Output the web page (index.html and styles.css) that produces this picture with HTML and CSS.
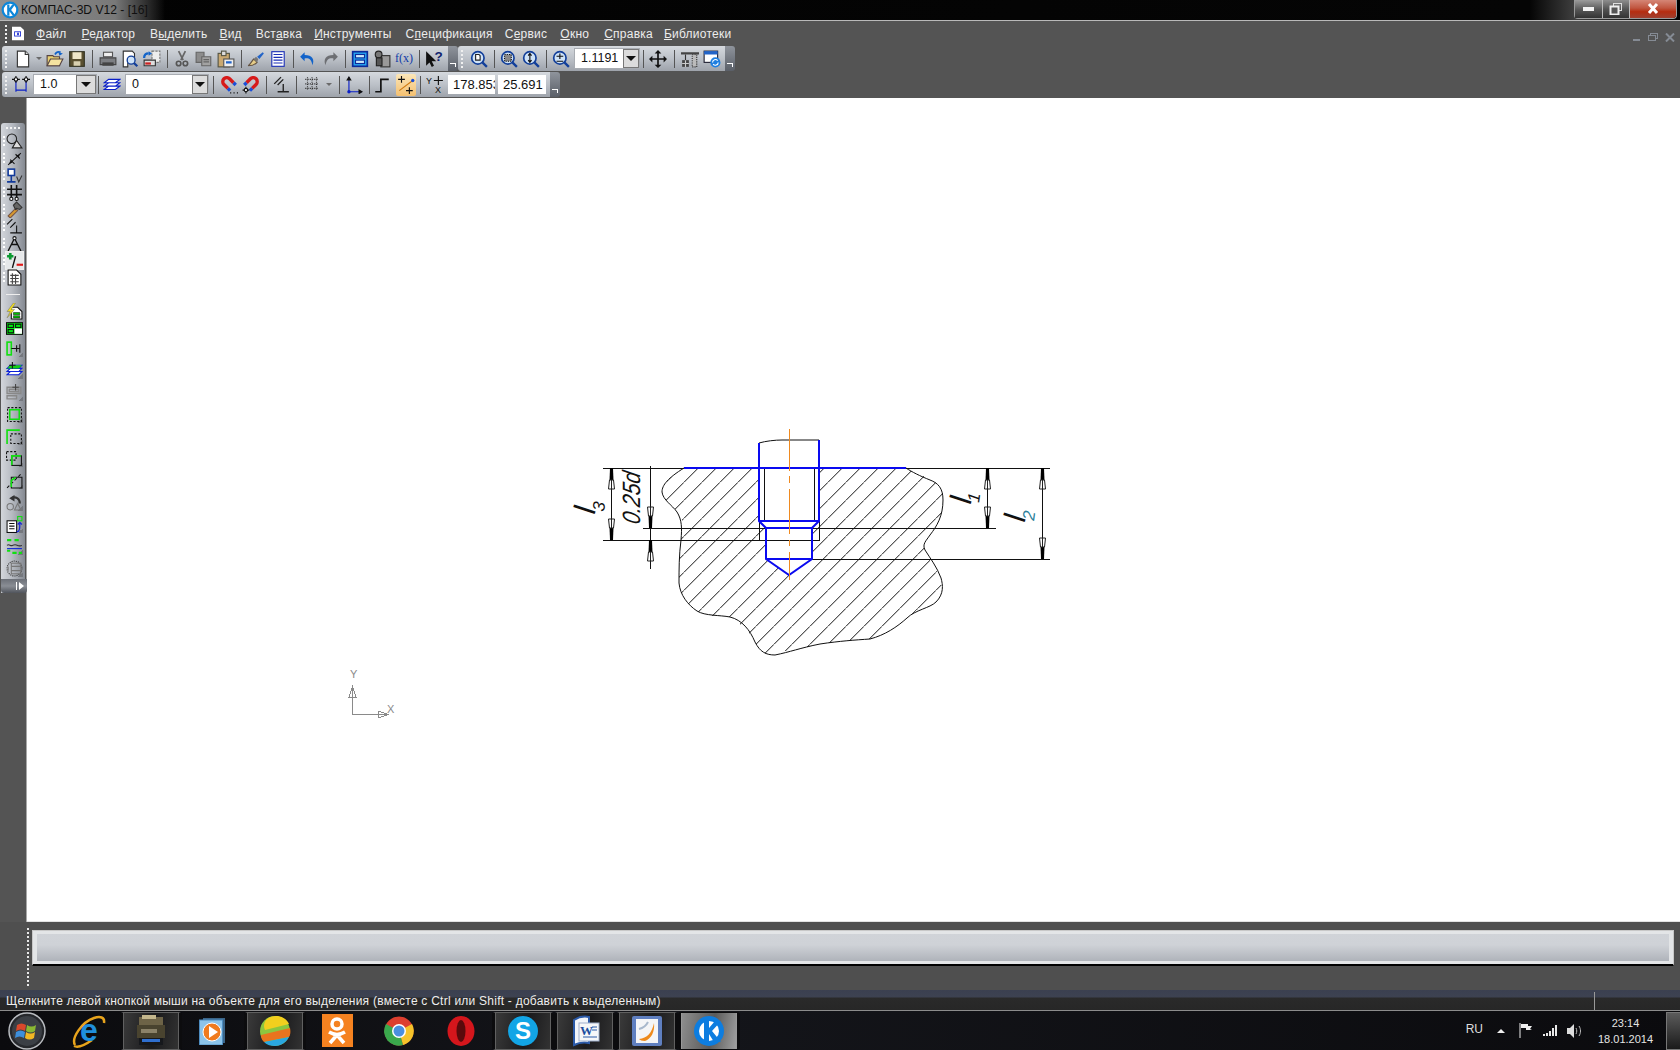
FILE: index.html
```html
<!DOCTYPE html>
<html lang="ru">
<head>
<meta charset="utf-8">
<title>КОМПАС-3D V12</title>
<link rel="stylesheet" href="styles.css">
</head>
<body>
<div class="app">
  <header class="titlebar">
    <svg class="applogo" viewBox="0 0 16 16"><circle cx="8" cy="8" r="7.5" fill="#0d86d8"/><circle cx="8" cy="8" r="5.5" fill="#fff"/><path d="M5.5 3v10h2V9l3 4h2.5L9 8l3.500-5H10L7.500 6.500V3z" fill="#0d86d8"/></svg>
    <span class="apptitle">КОМПАС-3D V12 - [16]</span>
    <div class="winbtns">
      <div class="wb wb-min"><span class="wb-dash"></span></div>
      <div class="wb wb-res"><svg width="14" height="12" viewBox="0 0 14 12"><rect x="4.500" y="0.500" width="8" height="7" fill="none" stroke="#ddd"/><rect x="1.500" y="3.500" width="8" height="8" fill="#555" stroke="#eee" stroke-width="2"/></svg></div>
      <div class="wb wb-close"><svg width="14" height="11" viewBox="0 0 14 11"><path d="M3 1l8 9M11 1l-8 9" stroke="#fff" stroke-width="3"/></svg></div>
    </div>
  </header>

  <nav class="menubar">
    <span class="grip grip-menu"></span>
    <svg class="docicon" viewBox="0 0 14 16"><path d="M0 0h10l4 4v12H0z" fill="#fff"/><rect x="3" y="6" width="7" height="5" fill="none" stroke="#1a2bd0"/><rect x="6" y="7" width="2" height="3" fill="#1a2bd0"/></svg>
    <span class="mi mi-1"><u>Ф</u>айл</span>
    <span class="mi mi-2"><u>Р</u>едактор</span>
    <span class="mi mi-3">В<u>ы</u>делить</span>
    <span class="mi mi-4"><u>В</u>ид</span>
    <span class="mi mi-5">Вст<u>а</u>вка</span>
    <span class="mi mi-6"><u>И</u>нструменты</span>
    <span class="mi mi-7">С<u>п</u>ецификация</span>
    <span class="mi mi-8">С<u>е</u>рвис</span>
    <span class="mi mi-9"><u>О</u>кно</span>
    <span class="mi mi-10"><u>С</u>правка</span>
    <span class="mi mi-11"><u>Б</u>иблиотеки</span>
    <div class="mdibtns">
      <svg width="8" height="8" viewBox="0 0 8 8"><rect y="6" width="7" height="2" fill="#858b94"/></svg>
      <svg width="10" height="8" viewBox="0 0 10 8"><rect x="2.500" y="0.500" width="7" height="5" fill="none" stroke="#858b94"/><rect x="0.500" y="2.500" width="7" height="5" fill="#555" stroke="#858b94"/></svg>
      <svg width="10" height="9" viewBox="0 0 10 9"><path d="M1 0.500l8 8M9 0.500l-8 8" stroke="#858b94" stroke-width="2"/></svg>
    </div>
  </nav>

  <div class="tbrow">
    <div class="tg tg-a">
      <span class="grip"></span>
      <span class="ic"><svg viewBox="0 0 16 16"><path d="M3 1h7l3 3v11H3z" fill="#fff" stroke="#333"/><path d="M10 1v3h3" fill="#ddd" stroke="#333"/></svg></span>
      <span class="ic ic-a"><span class="tri tri-g"></span></span>
      <span class="ic"><svg viewBox="0 0 16 16"><path d="M1 5h5l1 1h5v8H1z" fill="#e8d070" stroke="#544"/><path d="M1 14l3-6h11l-3 6z" fill="#f5e3a0" stroke="#544"/><path d="M8 4c1-2 3-3 5-2" fill="none" stroke="#1263c9" stroke-width="1.500"/><path d="M15 3l-3 2-1-3z" fill="#1263c9"/></svg></span>
      <span class="ic"><svg viewBox="0 0 16 16"><rect x="1.500" y="1.500" width="13" height="13" fill="#5a5030" stroke="#332"/><rect x="4" y="2" width="8" height="6" fill="#efe6c8"/><rect x="5" y="10" width="6" height="4" fill="#d8d0b0"/></svg></span>
      <span class="sep sep-9"></span>
      <span class="ic"><svg viewBox="0 0 16 16"><rect x="4" y="2" width="8" height="4" fill="#eee" stroke="#555"/><path d="M1 7h14v6H1z" fill="#7d7f83" stroke="#444"/><rect x="3" y="11" width="10" height="3" fill="#444"/></svg></span>
      <span class="ic"><svg viewBox="0 0 16 16"><path d="M2 1h8l2 2v6H6v6H2z" fill="#fff" stroke="#333"/><circle cx="9" cy="9" r="3.500" fill="#cfe3f7" stroke="#123f9a" stroke-width="1.200"/><path d="M11.500 11.500l3 3" stroke="#123f9a" stroke-width="2"/></svg></span>
      <span class="ic"><svg viewBox="0 0 16 16"><path d="M8 1h7v10H8z" fill="#eee" stroke="#777" stroke-dasharray="2 1"/><path d="M1 9h10v5H1z" fill="#ddd" stroke="#333"/><rect x="2" y="11" width="5" height="2" fill="#c22"/><path d="M1 7c0-3 2-4 4-4" fill="none" stroke="#1263c9" stroke-width="2"/><path d="M5 1l3 2-3 2z" fill="#1263c9"/></svg></span>
      <span class="sep"></span>
      <span class="ic"><svg viewBox="0 0 16 16"><path d="M5 1l4 8M11 1L7 9" stroke="#666" stroke-width="1.500"/><circle cx="5" cy="12" r="2" fill="none" stroke="#555" stroke-width="1.500"/><circle cx="11" cy="12" r="2" fill="none" stroke="#555" stroke-width="1.500"/></svg></span>
      <span class="ic"><svg viewBox="0 0 16 16"><path d="M1 2h7v9H1z" fill="#8c8c8c" stroke="#666"/><path d="M6 6h8v8H6z" fill="#a2a2a2" stroke="#666"/><path d="M7.500 8.500h5M7.500 10.500h5" stroke="#666"/></svg></span>
      <span class="ic"><svg viewBox="0 0 16 16"><rect x="1" y="3" width="10" height="12" fill="#c9a870" stroke="#554"/><rect x="4" y="1" width="4" height="4" fill="#ddd" stroke="#554"/><rect x="6" y="8" width="9" height="7" fill="#eee" stroke="#555"/><rect x="8" y="10" width="5" height="2" fill="#2264c8"/></svg></span>
      <span class="sep"></span>
      <span class="ic"><svg viewBox="0 0 16 16"><path d="M1 14c2-1 3-4 5-6l3 3c-2 2-5 3-8 3z" fill="#e6cd88" stroke="#654"/><path d="M6 8l2-2 2 2-1 3z" fill="#777"/><path d="M9 6l5-4 1 1-4 5z" fill="#2264c8"/></svg></span>
      <span class="ic"><svg viewBox="0 0 16 16"><rect x="2.500" y="1.500" width="11" height="13" fill="#fff" stroke="#1b2fb5"/><path d="M4 4h8M4 6.500h8M4 9h8M4 11.500h8" stroke="#1b2fb5"/></svg></span>
      <span class="sep"></span>
      <span class="ic"><svg viewBox="0 0 16 16"><path d="M5 2L1 6l4 4V7.500c4-.5 6 1 7 6 2-5 0-9-7-9z" fill="#1263c9"/></svg></span>
      <span class="ic"><svg viewBox="0 0 16 16"><path d="M11 2l4 4-4 4V7.500c-4-.5-6 1-7 6-2-5 0-9 7-9z" fill="#6d6f73"/></svg></span>
      <span class="sep"></span>
      <span class="ic"><svg viewBox="0 0 16 16"><rect x="1.500" y="1.500" width="13" height="13" fill="#27a4f0" stroke="#0d2a9a" stroke-width="1.500"/><rect x="4" y="4" width="8" height="3" fill="#cdeafa" stroke="#0d2a9a"/><rect x="4" y="9" width="8" height="3" fill="#cdeafa" stroke="#0d2a9a"/></svg></span>
      <span class="ic"><svg viewBox="0 0 16 16"><rect x="7" y="5" width="8" height="10" fill="#999" stroke="#333"/><circle cx="5" cy="4" r="3" fill="#777" stroke="#222"/><rect x="3" y="7" width="5" height="7" fill="#555" stroke="#222"/></svg></span>
      <span class="ic fx">f(x)</span>
      <span class="sep"></span>
      <span class="ic"><svg viewBox="0 0 16 16"><path d="M1 1v13l3-3 2 4 2-1-2-4h4z" fill="#111"/><text x="8.500" y="10" class="qm">?</text></svg></span>
    </div>
    <span class="chev"></span>
    <div class="tg tg-b">
      <span class="grip"></span>
      <span class="ic ic-c"><svg viewBox="0 0 16 16"><circle cx="7" cy="7" r="5.500" fill="#cfe3f7" stroke="#123f9a" stroke-width="1.500"/><path d="M5 4h3l1 1v4H5z" fill="#fff" stroke="#222"/><path d="M11 11l4 4" stroke="#123f9a" stroke-width="2"/></svg></span>
      <span class="sep"></span>
      <span class="ic"><svg viewBox="0 0 16 16"><circle cx="7" cy="7" r="5.500" fill="#cfe3f7" stroke="#123f9a" stroke-width="1.500"/><rect x="4" y="4" width="6" height="6" fill="#888" stroke="#111" stroke-dasharray="1 1"/><path d="M11 11l4 4" stroke="#123f9a" stroke-width="2"/></svg></span>
      <span class="ic"><svg viewBox="0 0 16 16"><circle cx="7" cy="7" r="5.500" fill="#cfe3f7" stroke="#123f9a" stroke-width="1.500"/><path d="M7 3.500v7M5.500 5L7 3l1.500 2M5.500 9L7 11l1.500-2" fill="none" stroke="#111"/><path d="M11 11l4 4" stroke="#123f9a" stroke-width="2"/></svg></span>
      <span class="sep"></span>
      <span class="ic"><svg viewBox="0 0 16 16"><circle cx="7" cy="7" r="5.500" fill="#cfe3f7" stroke="#123f9a" stroke-width="1.500"/><path d="M4 5.500h6M7 3v5M4 10h6" stroke="#111"/><path d="M11 11l4 4" stroke="#123f9a" stroke-width="2"/></svg></span>
      <div class="sel sel-z"><span class="val">1.1191</span><span class="drop"><span class="tri"></span></span></div>
      <span class="sep"></span>
      <span class="ic"><svg viewBox="0 0 16 16"><path d="M8 1v14M1 8h14" stroke="#111" stroke-width="1.500"/><path d="M8 0l3 3H5zM8 16l3-3H5zM0 8l3 3V5zM16 8l-3 3V5z" fill="#111"/></svg></span>
      <span class="sep sep-10"></span>
      <span class="ic"><svg viewBox="0 0 16 16"><path d="M0 2h16v2H0z" fill="#444"/><path d="M10 4h4v11h-4z" fill="#bbb" stroke="#333" stroke-dasharray="1 1"/><rect x="1" y="9" width="6" height="6" fill="#444"/><path d="M4 4v5" stroke="#333"/><path d="M1 12h6M4 9v6" stroke="#ccc"/></svg></span>
      <span class="ic"><svg viewBox="0 0 16 16"><rect x="1" y="1" width="12" height="10" fill="#fff" stroke="#223"/><rect x="1" y="1" width="12" height="3" fill="#2264c8"/><circle cx="11" cy="11" r="4.500" fill="#1f7fe0"/><path d="M8.500 11a2.500 2.500 0 0 1 4.500-1.500M13.500 11A2.500 2.500 0 0 1 9 12.500" fill="none" stroke="#fff"/></svg></span>
    </div>
    <span class="chev"></span>
  </div>

  <div class="tbrow tbrow-2">
    <div class="tg tg-c">
      <span class="grip"></span>
      <span class="ic"><svg viewBox="0 0 16 16"><path d="M3.500 3v11M12.500 3v11M3.500 12.500h9" stroke="#0a1fc8"/><path d="M0 3h7M3.500 0v6M9 3h7M12.500 0v6" stroke="#111"/><circle cx="3.500" cy="3" r="1.500" fill="#fff" stroke="#111"/><circle cx="12.500" cy="3" r="1.500" fill="#fff" stroke="#111"/></svg></span>
      <div class="sel sel-1"><span class="val">1.0</span><span class="drop"><span class="tri"></span></span></div>
      <span class="sep sep-t"></span>
      <span class="ic"><svg viewBox="0 0 16 16"><path d="M5 3h10l-4 3H1zM5 6h10l-4 3H1zM5 9h10l-4 3H1z" fill="#fff" stroke="#0a1fc8"/></svg></span>
      <div class="sel sel-2"><span class="val">0</span><span class="drop"><span class="tri"></span></span></div>
      <span class="sep sep-10"></span>
      <span class="ic"><svg viewBox="0 0 16 16"><path d="M7 11L3.500 7.500A3.500 3.500 0 0 1 8.500 2.500L12 6" fill="none" stroke="#d71a1a" stroke-width="3"/><path d="M7 11l2 2M12 6l2 2" stroke="#1a4fd7" stroke-width="3"/><path d="M9 15h1M12 15h1M15 15h1" stroke="#111"/></svg></span>
      <span class="ic"><svg viewBox="0 0 16 16"><path d="M9 11l3.500-3.500A3.500 3.500 0 0 0 7.500 2.500L4 6" fill="none" stroke="#d71a1a" stroke-width="3"/><path d="M9 11l-2 2" stroke="#1a4fd7" stroke-width="3"/><path d="M4 6L2 8" stroke="#1a4fd7" stroke-width="3"/><path d="M3.500 9.500v6M0.500 12.500h6" stroke="#111"/><circle cx="3.500" cy="12.500" r="1.500" fill="#fff" stroke="#111"/></svg></span>
      <span class="sep"></span>
      <span class="ic"><svg viewBox="0 0 16 16"><path d="M2 7l6-6M5 8l5-5M10 7v7M5 14h10" stroke="#222" stroke-width="1.200"/></svg></span>
      <span class="sep sep-9"></span>
      <span class="ic"><svg viewBox="0 0 16 16"><path d="M2 3h12M2 7h12M2 11h12M4 1v12M8 1v12M12 1v12" stroke="#333" stroke-dasharray="1 1"/></svg></span>
      <span class="ic ic-n"><span class="tri tri-g"></span></span>
      <span class="sep"></span>
      <span class="ic"><svg viewBox="0 0 16 16"><path d="M3.500 1v13H15" fill="none" stroke="#0a1fc8"/><path d="M3.500 0L1 4h5zM16 14l-4-2.500v5z" fill="#111"/><circle cx="3.500" cy="14" r="1.500" fill="#0a1fc8"/></svg></span>
      <span class="sep"></span>
      <span class="ic ic-s"><svg viewBox="0 0 16 16"><path d="M2 14h5V3h7" fill="none" stroke="#111" stroke-width="1.500"/></svg></span>
      <span class="ic ic-on"><svg viewBox="0 0 16 16"><path d="M2 13L14 4" stroke="#d07a10"/><path d="M4 0v6M1 3h6M11 10v6M8 13h6" stroke="#111"/><circle cx="14" cy="4" r="1.500" fill="#1a4fd7"/></svg></span>
      <span class="sep"></span>
      <span class="ic"><svg viewBox="0 0 16 16"><text x="0" y="7" class="yx">Y</text><path d="M11 0v8M7 4h8" stroke="#111"/><text x="8" y="15" class="yx">X</text></svg></span>
      <span class="inp inp-x">178.853</span>
      <span class="inp inp-y">25.691</span>
    </div>
    <span class="chev"></span>
  </div>

  <main class="workspace">
    <aside class="sidebar">
      <div class="vt">
        <div class="vgrip"></div>
        <span class="vb g"><svg viewBox="0 0 16 16"><circle cx="5.500" cy="5.500" r="4.500" fill="none" stroke="#222"/><path d="M6 14l4-7 5 7z" fill="#ddd" stroke="#222"/></svg></span>
        <span class="vb g"><svg viewBox="0 0 16 16"><path d="M2 14L14 3" stroke="#111"/><path d="M4 9l4 4M9 4l4 4" stroke="#111"/><path d="M3 13l3-1-2-2zM13 4l-3 1 2 2z" fill="#111"/></svg></span>
        <span class="vb g"><svg viewBox="0 0 16 16"><rect x="2" y="2" width="6" height="6" fill="#fff" stroke="#123a9a" stroke-width="1.500"/><path d="M5 8v6M1 14h8" stroke="#123a9a" stroke-width="1.500"/><path d="M10 9l2 5 3-6" fill="none" stroke="#333"/></svg></span>
        <span class="vb g"><svg viewBox="0 0 16 16"><path d="M1 5h14M1 10h14M5 1v14M10 1v14" stroke="#111" stroke-width="1.500"/><circle cx="5" cy="14" r="1.500" fill="#fff" stroke="#111"/><circle cx="10" cy="14" r="1.500" fill="#fff" stroke="#111"/></svg></span>
        <span class="vb g"><svg viewBox="0 0 16 16"><path d="M2 14l7-7 2 2-7 7z" fill="#d89a30" stroke="#754"/><path d="M7 4l3-3 5 5-2 2-3-1-1 1z" fill="#666" stroke="#333"/></svg></span>
        <span class="vb g"><svg viewBox="0 0 16 16"><path d="M1 6l5-5M4 9l5-5M10 7v7M4 14h11" stroke="#111"/></svg></span>
        <span class="vb g"><svg viewBox="0 0 16 16"><path d="M2 15L8 3l6 12M5 9h6" fill="none" stroke="#111" stroke-width="1.300"/><circle cx="8" cy="3" r="1.500" fill="#fff" stroke="#111"/></svg></span>
        <span class="vb g vb-on"><svg viewBox="0 0 16 16"><path d="M1 4h6M4 1v6" stroke="#0a9a30" stroke-width="2.500"/><path d="M9 4l-3 11" stroke="#111" stroke-width="1.300"/><path d="M10 12h6" stroke="#e01818" stroke-width="2"/></svg></span>
        <span class="vb g"><svg viewBox="0 0 16 16"><path d="M2 1h8l4 4v10H2z" fill="#fff" stroke="#111"/><path d="M4 6h8M4 9h8M4 12h8M6 4v10M9 5v9" stroke="#444"/></svg></span>
        <div class="vsep"></div>
        <span class="vb"><svg viewBox="0 0 16 16"><path d="M5 4h6l4 4v7H5z" fill="#fff" stroke="#111"/><path d="M7 9h6v2H7zM7 12h6v2H7z" fill="#00c800" stroke="#111" stroke-width=".5"/><path d="M7 0L1 8h3l-3 6 7-8H5l4-6z" fill="#f5e11c" stroke="#776"  stroke-width=".5"/></svg></span>
        <span class="vb"><svg viewBox="0 0 16 16"><rect x="0.500" y="2.500" width="15" height="11" fill="#00ee10" stroke="#111"/><rect x="2" y="4" width="5" height="3" fill="none" stroke="#111"/><rect x="9" y="4" width="5" height="3" fill="none" stroke="#111"/><rect x="2" y="9" width="5" height="3" fill="none" stroke="#111"/><rect x="8" y="8" width="7" height="5" fill="#fff"/></svg></span>
        <span class="vb vb-m vb-r"><svg viewBox="0 0 16 16"><rect x="1" y="2" width="4" height="12" fill="none" stroke="#10e010" stroke-width="1.500"/><path d="M5 8h8M10 5v6" stroke="#111"/><path d="M13 4v8" stroke="#111"/></svg></span>
        <span class="vb vb-m vb-r"><svg viewBox="0 0 16 16"><path d="M4 3h11l-3 3H1zM4 6h11l-3 3H1zM4 9h11l-3 3H1z" fill="#fff" stroke="#0a1fd8"/><path d="M4 3h11l-3 3H1z" fill="#10d010"/><path d="M6 0v6M3 3h6" stroke="#111"/></svg></span>
        <span class="vb vb-m vb-r"><svg viewBox="0 0 16 16"><path d="M1 3h13v6H1zM3 5h9v2H3zM1 11h9v3H1z" fill="none" stroke="#888" stroke-width="1.300"/><path d="M9 0v6M6 3h6" stroke="#444"/></svg></span>
        <span class="vb vb-m vb-r"><svg viewBox="0 0 16 16"><rect x="1.500" y="1.500" width="13" height="13" fill="none" stroke="#111" stroke-dasharray="2 1.500"/><rect x="3.500" y="3.500" width="9" height="9" fill="none" stroke="#10e010" stroke-width="1.500"/></svg></span>
        <span class="vb vb-m vb-r"><svg viewBox="0 0 16 16"><path d="M1 15V2h12" fill="none" stroke="#10e010" stroke-width="1.500"/><rect x="4.500" y="5.500" width="10" height="9" fill="none" stroke="#111" stroke-dasharray="2 1.500"/></svg></span>
        <span class="vb vb-m vb-r"><svg viewBox="0 0 16 16"><rect x="0.500" y="1.500" width="9" height="8" fill="none" stroke="#111" stroke-dasharray="2 1.500"/><rect x="5.500" y="5.500" width="9" height="9" fill="none" stroke="#111"/><path d="M5.500 14V5.500H14" fill="none" stroke="#10e010" stroke-width="1.500"/></svg></span>
        <span class="vb vb-m vb-r"><svg viewBox="0 0 16 16"><path d="M1 15L15 1" stroke="#111" stroke-dasharray="3 2"/><path d="M5 15V5h10v10z" fill="none" stroke="#111"/><path d="M5 14V8l4-3" fill="none" stroke="#10e010" stroke-width="1.500"/></svg></span>
        <span class="vb vb-m vb-r"><svg viewBox="0 0 16 16"><circle cx="4" cy="12" r="3" fill="none" stroke="#777"/><path d="M8 15h6l-3-6z" fill="none" stroke="#777"/><path d="M13 9C13 4 9 2 5 4" fill="none" stroke="#333" stroke-width="2"/><path d="M8 1L3 4l5 3z" fill="#333"/></svg></span>
        <span class="vb vb-m vb-r"><svg viewBox="0 0 16 16"><rect x="1" y="4.500" width="9" height="11" fill="#fff" stroke="#111"/><path d="M3 7h5M3 9.500h5M3 12h5" stroke="#111"/><rect x="11" y="0.500" width="4" height="4" fill="none" stroke="#10e010"/><path d="M10 15c3 0 3-3 3-8M11 8l2-2 2 2" fill="none" stroke="#1a2bd8" stroke-width="1.200"/></svg></span>
        <span class="vb vb-m vb-r"><svg viewBox="0 0 16 16"><path d="M1 2h4M8 2h4M1 12h3M6 14h4M12 14h3" stroke="#10e010" stroke-width="2"/><path d="M1 7c2-2 3 1 5 0s3-1 5 0 3 0 4 0" fill="none" stroke="#333"/><path d="M1 10h14" stroke="#0a1fd8"/></svg></span>
        <span class="vb vb-m vb-r"><svg viewBox="0 0 16 16"><circle cx="8" cy="8" r="7" fill="none" stroke="#333" stroke-dasharray="1 1"/><rect x="5" y="3" width="9" height="10" fill="none" stroke="#777"/><path d="M5 6h9M5 10h9M2 6v4" stroke="#777"/></svg></span>
        <div class="vchev"><svg width="8" height="8" viewBox="0 0 8 8"><path d="M0.500 0v8" stroke="#fff"/><path d="M3 0l5 4-5 4z" fill="#fff"/></svg></div>
      </div>
    </aside>
    <section class="canvas">
      <svg class="drawing" width="1653" height="824" viewBox="27 98 1653 824">
        <defs>
          <pattern id="hatch" patternUnits="userSpaceOnUse" width="18" height="18">
            <path d="M0 14.300L14.300 0M14.300 18L18 14.300" stroke="#111" stroke-width="1" fill="none"/>
          </pattern>
          <g id="ar">
            <path d="M-1.500 0H1.500L2 13H-2Z" fill="#000"/>
            <path d="M-2 12L-3 21H3L2 12Z" fill="#fff" stroke="#222" stroke-width="1"/>
            <path d="M0 12V21" stroke="#222" stroke-width="1"/>
          </g>
        </defs>

        <path class="hatchfill" fill-rule="evenodd" d="M684 468L906 468L935 482L943 490L943 505L942 517L930 535L924 547L928 557L937 570L942 587L935 603L917 610L907 618L897 627L870 639L820 644L780 652L772 655L762 653L753 640L745 628L730 617L710 616L693 610L682 595L679 583L679 560L681 540L682 520L675 510L663 498L662 490L668 480ZM759 468L759 521L766 528L766 559L789 575L812 559L812 528L819 521L819 468Z"/>
        <path class="outline" d="M684 468C668 478 662 485 662 492C663 500 672 505 677 512C682 520 682 528 681 540C679 555 679 570 679 583C680 595 688 605 697 611C705 616 720 615 730 617C742 620 750 630 755 642C760 652 766 655 775 655C790 652 800 648 820 644C840 641 855 640 870 639C885 635 897 627 907 618C915 610 930 608 936 602C944 594 943 585 941 578C937 567 930 558 925 550C922 544 926 541 930 535C937 526 943 516 943 500C943 488 938 483 930 480C920 476 912 472 906 468"/>

        <path class="line" d="M603 468.500H1050M643 528.500H996M603 540.500H820M812 559.500H1050"/>
        <path class="line" d="M611.500 468V540M650.500 466V569M987.500 468V528M1042.500 468V559"/>
        <path class="line" d="M764.500 468V521M814.500 468V521M759.500 521V540M819.500 521V540"/>
        <use href="#ar" transform="translate(611.500 468)" />
        <use href="#ar" transform="translate(611.500 540) scale(1 -1)" />
        <use href="#ar" transform="translate(650.500 528) scale(1 -1)" />
        <use href="#ar" transform="translate(650.500 540)" />
        <use href="#ar" transform="translate(987.500 468)" />
        <use href="#ar" transform="translate(987.500 528) scale(1 -1)" />
        <use href="#ar" transform="translate(1042.500 468)" />
        <use href="#ar" transform="translate(1042.500 559) scale(1 -1)" />

        <path class="thin" d="M759 443C766 441 775 440 782 440H819"/>
        <path class="blue" d="M684 468H906M759 443V521L766 528V559L789 575L812 559V528L819 521V440M759 521H819M766 528H812M766 559H812"/>
        <path class="axis" d="M789.500 429V471M789.500 476V483M789.500 489V534M789.500 540V546M789.500 552V580"/>

        <text class="lbl" transform="translate(640 525) rotate(-90) skewX(-10)" textLength="52" lengthAdjust="spacingAndGlyphs">0.25d</text>
        <text class="lt" transform="translate(594 516) rotate(-72)">l</text>
        <text class="ls" transform="translate(604 512) rotate(-82)">3</text>
        <text class="lt" transform="translate(970 506) rotate(-72)">l</text>
        <text class="ls" transform="translate(979 503) rotate(-82)">1</text>
        <text class="lt" transform="translate(1024 524) rotate(-72)">l</text>
        <text class="ls ls-t" transform="translate(1034 521) rotate(-82)">2</text>

        <path class="ucs" d="M352.500 687V714.500H388M352.500 687L349 697H356ZM388 714.500L378 711V718Z"/>
        <text class="ucst" x="350" y="678">Y</text>
        <text class="ucst" x="387" y="713">X</text>
      </svg>
    </section>
  </main>

  <section class="cmdarea">
    <div class="cmdgrip"></div>
    <div class="cmdpanel"><div class="cmdinner"></div></div>
  </section>

  <div class="statusbar">
    <span class="statustext">Щелкните левой кнопкой мыши на объекте для его выделения (вместе с Ctrl или Shift - добавить к выделенным)</span>
    <span class="statusdiv"></span>
  </div>

  <footer class="taskbar">
    <div class="startbtn">
      <svg width="38" height="38" viewBox="0 0 38 38"><circle cx="19" cy="19" r="18" fill="#26282c" stroke="#b9bcc0" stroke-width="1.500"/><circle cx="19" cy="19" r="15" fill="#3b3f45"/><path d="M9 13c3-2 6-2 9 0l-1 6c-3-2-6-2-9 0z" fill="#d9482b"/><path d="M19 13c3 2 6 2 9 0l-1 6c-3 2-6 2-9 0z" fill="#8ab833"/><path d="M8 20c3-2 6-2 9 0l-1 6c-3-2-6-2-9 0z" fill="#3d8fdc"/><path d="M18 20c3 2 6 2 9 0l-1 6c-3 2-6 2-9 0z" fill="#f2b824"/></svg>
    </div>
    <div class="tk"><svg width="34" height="34" viewBox="0 0 34 34"><path d="M3 31C-1 24 10 8 22 4c6-2 11-1 10 5" fill="none" stroke="#e8a41c" stroke-width="2.500"/><path d="M2 32c4 2 11-1 18-6" fill="none" stroke="#e8a41c" stroke-width="2.500"/><text x="17" y="27" class="ie-e">e</text></svg></div>
    <div class="tk tk-on"><svg width="30" height="32" viewBox="0 0 30 32"><path d="M3 2h24v8H3z" fill="#6d6347"/><path d="M6 0h14v4H6z" fill="#c3b68c"/><path d="M1 10h28v13H1z" fill="#49432f"/><path d="M5 14h16v4H5z" fill="#8b8269"/><path d="M3 23h24v7H3z" fill="#16181c"/><path d="M6 24h18v3H6z" fill="#2f6fd0"/></svg></div>
    <div class="tk"><svg width="28" height="28" viewBox="0 0 28 28"><rect x="4" y="1" width="22" height="25" fill="#5aa0d8" opacity=".6"/><rect x="0.500" y="3" width="23" height="25" fill="#8cc4ea" stroke="#4d8cc0"/><circle cx="13" cy="15" r="9" fill="#ef7b1e" stroke="#fff"/><path d="M10 9l9 6-9 6z" fill="#fff"/></svg></div>
    <div class="tk tk-on"><svg width="32" height="32" viewBox="0 0 32 32"><circle cx="16" cy="16" r="15" fill="#8dc63f"/><path d="M8 4C14-1 26 0 30 9L6 15C4 11 5 7 8 4z" fill="#f3cf1e"/><path d="M2 20l29-7c1 5 0 7-1 9L5 27c-2-2-3-4-3-7z" fill="#e9741e"/><path d="M5 27l25-5c-3 6-9 9-14 9-4 0-8-1-11-4z" fill="#2aa7e0"/></svg></div>
    <div class="tk"><div class="okicon"><svg width="22" height="28" viewBox="0 0 22 28"><circle cx="11" cy="7" r="5" fill="none" stroke="#fff" stroke-width="3.500"/><path d="M3 15c5 3 11 3 16 0M11 18l-7 8M11 18l7 8" fill="none" stroke="#fff" stroke-width="3.500"/></svg></div></div>
    <div class="tk"><svg width="30" height="30" viewBox="0 0 30 30"><circle cx="15" cy="15" r="14.500" fill="#dd3f2f"/><path d="M15 15L28 8a14.500 14.500 0 0 1-9 21z" fill="#f6c32a"/><path d="M15 15l4 14A14.500 14.500 0 0 1 2 8z" fill="#3aa84c"/><circle cx="15" cy="15" r="7" fill="#fff"/><circle cx="15" cy="15" r="5.500" fill="#4a8fe0"/></svg></div>
    <div class="tk"><svg width="30" height="34" viewBox="0 0 30 34"><ellipse cx="15" cy="17" rx="13.500" ry="15" fill="#d4161c"/><ellipse cx="15" cy="17" rx="4.500" ry="11" fill="#5a0a0c"/></svg></div>
    <div class="tk tk-on"><span class="skype">S</span></div>
    <div class="tk tk-on"><svg width="32" height="32" viewBox="0 0 32 32"><path d="M5 5C11 1 15 1 20 2v26C15 27 9 28 5 30z" fill="#f2f5fa" stroke="#2b5aa8" stroke-width="2"/><rect x="10" y="8" width="20" height="18" fill="#f6f7f9" stroke="#9fb0cc"/><text x="11" y="20" class="word-w">W</text><path d="M23 12h5M23 15h5M14 22h14" stroke="#2b5aa8"/></svg></div>
    <div class="tk tk-on"><svg width="32" height="32" viewBox="0 0 32 32"><rect x="1" y="1" width="30" height="30" rx="2" fill="#5f7fc0"/><rect x="5" y="4" width="22" height="24" fill="#f4f5f7"/><path d="M8 24c8-1 13-6 15-16 1 9-3 16-9 18-3 0-5-1-6-2z" fill="#ee8a1c"/><path d="M8 14c4-1 7-3 9-7" fill="none" stroke="#a8b8cc" stroke-width="2"/></svg></div>
    <div class="tk tk-bright"><svg width="32" height="32" viewBox="0 0 32 32"><circle cx="16" cy="16" r="15" fill="#0d7de0"/><circle cx="16" cy="16" r="10" fill="#fff"/><path d="M11 6h5v7l6-7h6l-9 10 9 11h-7l-5-8v9h-5z" fill="#0d7de0"/></svg></div>
    <div class="tray">
      <span class="lang">RU</span>
      <span class="tray-up"></span>
      <svg width="14" height="15" viewBox="0 0 14 15"><path d="M1 0v15" stroke="#eee"/><path d="M2 1h7v2h4l-2 3 2 1H7V5H2z" fill="#eee"/></svg>
      <svg class="tr-net" width="15" height="11" viewBox="0 0 15 11"><path d="M0 9h2v2H0zM3 8h2v3H3zM6 6h2v5H6zM9 3h2v8H9zM12 0h2v11h-2z" fill="#e8e8e8"/></svg>
      <svg class="tr-vol" width="15" height="14" viewBox="0 0 15 14"><path d="M0 4h3l4-4v14l-4-4H0z" fill="#ddd"/><path d="M9 4c1 2 1 4 0 6M12 2c2 3 2 7 0 10" fill="none" stroke="#bbb"/></svg>
      <div class="clock"><span>23:14</span><span>18.01.2014</span></div>
      <div class="showdesk"></div>
    </div>
  </footer>
</div>
</body>
</html>
```

FILE: styles.css
```css
* { box-sizing: border-box; }
html, body { margin: 0; padding: 0; background: #545454; }
body { font-family: "Liberation Sans", Arial, sans-serif; font-size: 12px; overflow: hidden; }
.app { width: 1680px; height: 1050px; display: flex; flex-direction: column; overflow: hidden; }

/* title bar */
.titlebar { height: 21px; display: flex; align-items: center; border-bottom: 1px solid #b9b9b9; padding: 0 0 1px 1px;
  background: linear-gradient(90deg, rgba(170,170,170,.85) 0, rgba(150,150,150,.8) 115px, rgba(70,70,70,.6) 148px, transparent 165px),
    linear-gradient(90deg, #020202 0, #050505 1530px, #3f3f3f 1575px, #000 1680px); }
.applogo { width: 18px; height: 18px; flex: none; }
.apptitle { margin-left: 2px; color: #101010; font-size: 12.1px; }
.winbtns { margin-left: auto; margin-right: 3px; height: 19px; margin-top: -1px; display: flex; border: 1px solid #9a9a9a; border-top: 0; border-radius: 0 0 4px 4px; }
.wb { height: 18px; display: flex; align-items: center; justify-content: center; }
.wb-min { width: 28px; background: linear-gradient(#9c9c9c, #555 55%, #333); border-right: 1px solid #bbb; }
.wb-res { width: 27px; background: linear-gradient(#8e8e8e, #505050 55%, #333); border-right: 1px solid #bbb; }
.wb-close { width: 46px; background: linear-gradient(#d58676, #c0553f 45%, #b52d10 65%, #a04030); border-radius: 0 0 3px 0; }
.wb-dash { width: 11px; height: 4px; background: #f2f2f2; }

/* menu */
.menubar { height: 25px; display: flex; align-items: center; color: #ececec; font-size: 12px; padding-left: 2px; background: #545454; }
.grip-menu { margin-right: 4px; }
.docicon { width: 12px; height: 15px; flex: none; margin-right: 12px; }
.mi { white-space: nowrap; margin-right: 15px; letter-spacing: .02em; }
.mi-3, .mi-5, .mi-7 { margin-right: 12px; }
.mi-4, .mi-6 { margin-right: 14px; }
.mi-8 { margin-right: 13px; }
.mi-10 { margin-right: 11px; }
.mi u { text-decoration: underline; }
.mdibtns { margin-left: auto; margin-right: 5px; margin-top: 7px; display: flex; gap: 7px; align-items: center; }

/* toolbars */
.grip { flex: none; width: 2px; height: 18px; margin: 0 5px 0 3px;
  background: repeating-linear-gradient(#f0f0f0 0 2px, transparent 2px 4px); }
.tbrow { height: 25px; margin-bottom: 1px; display: flex; padding-left: 2px; }
.tg { height: 25px; display: flex; align-items: center; border-radius: 3px 0 0 3px;
  background: linear-gradient(#d5d9de, #bcc1c8 50%, #9ea3ab); }
.tg-a { width: 446px; }
.tg-b { width: 267px; }
.tg-c { width: 548px; }
.tg-c .grip { margin-right: 3px; }
.chev { flex: none; width: 10px; height: 25px; border-radius: 0 3px 3px 0; position: relative;
  background: linear-gradient(#8f949c, #5a5f68); }
.chev::after { content: ""; position: absolute; left: 2px; bottom: 4px; width: 5px; height: 3px; border-top: 1px solid #fff; border-right: 1px solid #fff; }
.ic { flex: none; width: 22px; height: 24px; display: flex; align-items: center; justify-content: center; }
.ic svg { width: 18px; height: 18px; }
.ic-a { width: 10px; }
.ic-n { width: 12px; }
.ic-s { width: 18px; }
.ic-on { width: 20px; height: 22px; margin-left: 5px; background: linear-gradient(#fbe6b8, #f4c070); border-radius: 2px; }
.sep { flex: none; width: 8px; height: 18px; background: linear-gradient(#555, #555) center / 1px 100% no-repeat; }
.sep-9 { width: 9px; }
.sep-10 { width: 10px; }
.sep-t { width: 5px; }
.fx { font-family: "Liberation Serif", serif; font-size: 12px; color: #0f3aa8; white-space: nowrap; }
.qm { font-family: "Liberation Sans", sans-serif; font-size: 12px; font-weight: 700; fill: #11236e; }
.yx { font-family: "Liberation Sans", sans-serif; font-size: 8px; fill: #111; }
.tri { width: 0; height: 0; border-left: 5px solid transparent; border-right: 5px solid transparent; border-top: 5px solid #111; }
.tri-g { border-left-width: 3px; border-right-width: 3px; border-top: 3px solid #6a6a6a; }
.sel { flex: none; height: 19px; display: flex; background: #fff; outline: 1px solid #a8acb2; margin-left: 2px; }
.val { flex: 1; padding-left: 6px; line-height: 19px; color: #111; font-size: 12.5px; }
.drop { width: 16px; display: flex; align-items: center; justify-content: center; background: #dcdcdc; border: 1px solid #777; }
.sel-z { width: 64px; margin-left: 3px; }
.sel-1 { width: 62px; margin-left: 2px; }
.sel-2 { width: 82px; margin-left: 3px; }
.sel-1 .drop { width: 20px; }
.inp { flex: none; height: 19px; line-height: 19px; background: #fff; color: #111; padding-left: 5px; overflow: hidden; white-space: nowrap; font-size: 13px; }
.inp-x { width: 47px; margin-left: 2px; }
.inp-y { width: 48px; margin-left: 3px; }

/* workspace */
.workspace { height: 824px; display: flex; }
.sidebar { width: 27px; flex: none; padding: 25px 0 0 1px; background: #545454; border-right: 1px solid #a8a8a8; }
.vt { width: 24px; background: linear-gradient(90deg, #d3d6db, #b7bbc2 45%, #858a92); border-radius: 3px 3px 0 0; }
.vgrip { height: 10px; background: repeating-linear-gradient(90deg, #f4f4f4 0 2px, transparent 2px 4px) 5px 4px / 15px 2px no-repeat; }
.vb { display: flex; height: 17px; align-items: center; justify-content: center; padding-left: 3px; }
.vb svg { width: 17px; height: 17px; flex: none; }
.vb.g { background: repeating-linear-gradient(#fff 0 2px, transparent 2px 4px) 2px 3px / 2px 11px no-repeat; }
.vb-on svg { background: #e6e8ea; outline: 1px solid #eee; }
.vb-r { height: 22px; }
.vb-m { background: linear-gradient(135deg, transparent 50%, #75787e 50%) right 2px bottom 2px / 5px 5px no-repeat; }
.vsep { height: 17px; background: linear-gradient(#eee, #eee) 5px center / 14px 1px no-repeat; }
.vchev { height: 14px; margin-right: -2px; background: linear-gradient(#6c7078, #8a8e95 50%, #50545c); display: flex; align-items: center; justify-content: flex-end; padding-right: 3px; border-radius: 0 0 3px 3px; }
.canvas { flex: 1; background: #fff; border-bottom: 1px solid #e2e2e2; overflow: hidden; }
.drawing { display: block; }
.hatchfill { fill: url(#hatch); shape-rendering: crispEdges; }
.outline { fill: none; stroke: #111; stroke-width: 1; }
.line { fill: none; stroke: #111; stroke-width: 1; shape-rendering: crispEdges; }
.thin { fill: none; stroke: #111; stroke-width: 1; }
.blue { fill: none; stroke: #0a0af0; stroke-width: 2; }
.axis { fill: none; stroke: #ef8a20; stroke-width: 1; shape-rendering: crispEdges; }
.lbl { font-family: "Liberation Sans", sans-serif; font-style: italic; font-size: 25px; fill: #111; }
.lt { font-family: "Liberation Sans", sans-serif; font-size: 31px; fill: #111; }
.ls { font-family: "Liberation Sans", sans-serif; font-style: italic; font-size: 17px; fill: #111; }
.ls-t { fill: #2b7f9a; }
.ucs { fill: none; stroke: #8a8a8a; stroke-width: 1; shape-rendering: crispEdges; }
.ucst { font-family: "Liberation Sans", sans-serif; font-size: 11px; fill: #8a8a8a; }

/* command panel */
.cmdarea { height: 68px; flex: none; display: flex; align-items: flex-start; background: #4f4f4f; padding: 6px 6px 0 27px; }
.cmdgrip { width: 2px; height: 58px; flex: none; background: repeating-linear-gradient(#e8e8e8 0 2px, transparent 2px 4px); margin-right: 3px; }
.cmdpanel { flex: 1; height: 36px; margin-top: 2px; padding: 3px 4px; background: #e3e5e7; border: 1px solid #c8c8c8; border-bottom: 2px solid #000; }
.cmdinner { height: 100%; background: linear-gradient(#d0d3d8, #cfd2d7 40%, #afb3ba); }

/* status */
.statusbar { height: 20px; flex: none; display: flex; align-items: center; padding: 2px 0 0 6px; color: #eee; background: linear-gradient(#3b4050 0, #3d4251 35%, #2a2a2a 40%, #272727); font-size: 12px; }
.statustext { letter-spacing: .24px; white-space: nowrap; }
.statusdiv { margin-left: 933px; width: 1px; height: 18px; background: #999; }

/* taskbar */
.taskbar { height: 40px; flex: none; display: flex; align-items: center; border-top: 1px solid #8c8c8c; background: linear-gradient(90deg, #0b0b0e, #14151a 40%, #0b0b0e); color: #ddd; }
.startbtn { width: 58px; flex: none; display: flex; justify-content: flex-start; padding-left: 8px; }
.tk { width: 62px; height: 38px; flex: none; display: flex; align-items: center; justify-content: center; margin: 0; border: 1px solid transparent; }
.tk-on { border: 1px solid #5a5a5a; border-width: 1px 3px 1px 3px; border-color: #606060 #0c0c0e; background: linear-gradient(100deg, #3b3b3b, #1a1a1c 55%, #333); border-radius: 3px; box-shadow: inset 1px 0 #606060, inset -1px 0 #606060; }
.tk-bright { border: 1px solid #0c0c0e; border-width: 1px 3px; background: linear-gradient(100deg, #909090, #5a5a5a 55%, #a2a2a2); border-radius: 3px; box-shadow: inset 1px 0 #999, inset -1px 0 #999; }
.ie-e { font-family: "Liberation Sans", sans-serif; font-weight: 700; font-size: 32px; fill: #1f8fdc; text-anchor: middle; }
.okicon { width: 31px; height: 33px; background: #f58220; display: flex; align-items: center; justify-content: center; }
.skype { width: 30px; height: 30px; border-radius: 50%; background: #12a5e6; color: #fff; font-weight: 700; font-size: 24px; text-align: center; line-height: 30px; }
.word-w { font-family: "Liberation Serif", serif; font-weight: 700; fill: #1d4fa0; font-size: 13px; }
.tray { margin-left: auto; display: flex; align-items: center; height: 100%; }
.lang { font-size: 12px; margin-right: 14px; margin-top: -4px; color: #ddd; }
.tray-up { width: 0; height: 0; border-left: 4px solid transparent; border-right: 4px solid transparent; border-bottom: 4px solid #eee; margin-right: 14px; }
.tr-net { margin-left: 10px; }
.tr-vol { margin-left: 9px; }
.clock { width: 71px; margin-left: 8px; display: flex; flex-direction: column; align-items: center; font-size: 11px; line-height: 16px; color: #e4e4e4; }
.showdesk { width: 14px; height: 38px; margin-left: 5px; border: 1px solid #777; border-right: 0; background: linear-gradient(#5b5b5b, #1a1a1a); }
```
